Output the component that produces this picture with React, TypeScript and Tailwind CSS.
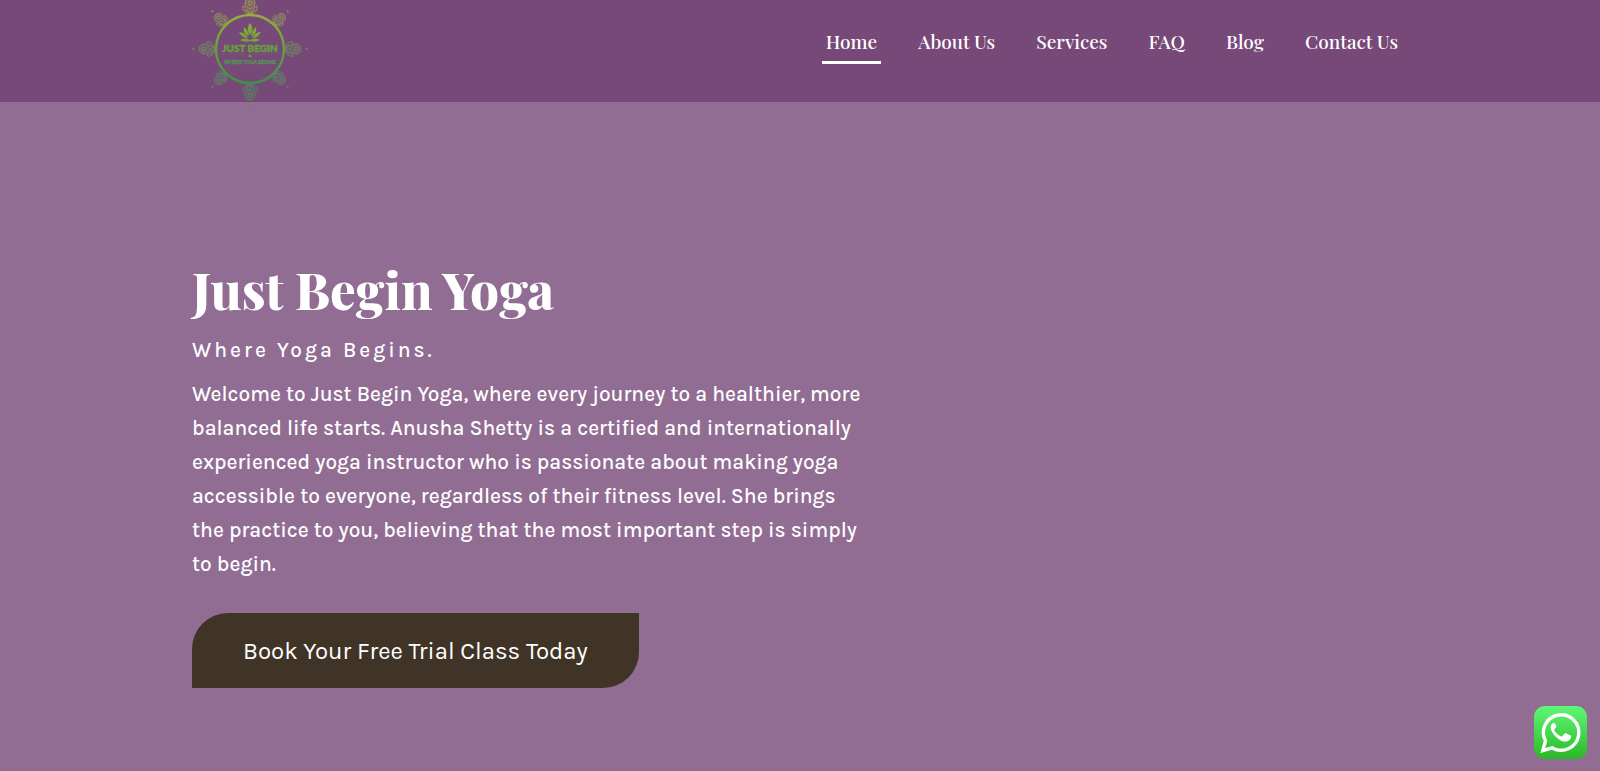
const navItems = ["Home", "About Us", "Services", "FAQ", "Blog", "Contact Us"];

// Flowers around the logo ring, one every 45 degrees
const flowers = [
  { angle: 0, scale: 1, color: "#a0a04e" },
  { angle: 45, scale: 0.86, color: "#909a5c" },
  { angle: 90, scale: 1, color: "#6f9060" },
  { angle: 135, scale: 0.86, color: "#5f8a64" },
  { angle: 180, scale: 1, color: "#4f8c5c" },
  { angle: 225, scale: 0.86, color: "#5f8a64" },
  { angle: 270, scale: 1, color: "#6f9060" },
  { angle: 315, scale: 0.86, color: "#909a5c" },
];

const Logo = () => (
  <svg viewBox="-58 -58 116 116" className="h-[116px] w-[116px]" role="img" aria-label="Just Begin, where yoga begins">
    <defs>
      <linearGradient id="leaf" gradientUnits="userSpaceOnUse" x1="0" y1="-36" x2="0" y2="36">
        <stop offset="0" stopColor="#9ab03a" />
        <stop offset="0.5" stopColor="#66a03c" />
        <stop offset="1" stopColor="#3c8f48" />
      </linearGradient>
    </defs>
    {flowers.map((f) => (
      <g
        key={f.angle}
        transform={`rotate(${f.angle}) translate(0 -34) scale(${f.scale})`}
        fill="none"
        stroke={f.color}
        strokeWidth="0.9"
      >
        <path
          d="M0-17C2-17 5-15 5-12C5-9 3-7 0-6C-3-7-5-9-5-12C-5-15-2-17 0-17Z"
          fill={f.color}
          fillOpacity="0.3"
        />
        <circle cx="0" cy="-12" r="2" />
        <path d="M0-6V-1" />
        <path d="M-1-1C-2-5-4-8-7-9C-8-5-5-2-1-1M-1-1L-5-6" />
        <path d="M1-1C2-5 4-8 7-9C8-5 5-2 1-1M1-1L5-6" />
        <circle cx="0" cy="-22.5" r="1.1" fill={f.color} stroke="none" />
      </g>
    ))}
    <circle r="34" fill="none" stroke="url(#leaf)" strokeWidth="2.4" />
    <g fill="url(#leaf)">
      <path d="M0-26C3-22 3-18 0-14C-3-18-3-22 0-26Z" />
      <path d="M-6-22C-3-20-2-17-1-13C-5-14-7-17-6-22Z" />
      <path d="M6-22C3-20 2-17 1-13C5-14 7-17 6-22Z" />
      <path d="M-11-17C-7-17-4-15-2-11C-6-11-9-13-11-17Z" />
      <path d="M11-17C7-17 4-15 2-11C6-11 9-13 11-17Z" />
      <path d="M-10-9C-6-11-3-11 0-9C3-11 6-11 10-9C7-7 3-7 0-8C-3-7-7-7-10-9Z" />
      <path d="M0 5L2 7L0 9L-2 7Z" />
    </g>
    <path d="M-29 5H-3M3 5H29" stroke="#75626f" strokeWidth="0.6" />
    <text
      y="3"
      textAnchor="middle"
      fill="#66a03c"
      stroke="#66a03c"
      strokeWidth="0.5"
      className="font-['Lato'] text-[10px] font-black"
    >
      JUST BEGIN
    </text>
    <text
      y="15"
      textAnchor="middle"
      fill="#56905a"
      stroke="#56905a"
      strokeWidth="0.3"
      className="font-['Lato'] text-[5px] font-black"
    >
      WHERE YOGA BEGINS
    </text>
  </svg>
);

const WhatsAppIcon = () => (
  <svg viewBox="0 0 53 53" className="h-[53px] w-[53px]" aria-hidden="true">
    <defs>
      <linearGradient id="whatsapp" x1="0" y1="0" x2="0" y2="1">
        <stop offset="0" stopColor="#5ff777" />
        <stop offset="1" stopColor="#2bb826" />
      </linearGradient>
    </defs>
    <rect width="53" height="53" rx="11" fill="url(#whatsapp)" />
    <path
      d="M8.8 44.5L11.5 34.8A17.7 17.7 0 1 1 18.4 41.9Z"
      fill="none"
      stroke="#fff"
      strokeWidth="3.4"
    />
    <path
      d="M21.5 18.3C20.9 17 20.3 17 19.5 17C18.5 17 16.7 18.7 16.7 21.6C16.7 25 20 29.4 23.4 32.2C26.8 34.8 29.5 35.6 31.6 35.6C34 35.6 36.7 33.5 36.9 31.8C37.1 30.4 37.1 29.8 36.4 29.4L32 27.3C31.2 27 30.7 27.1 30.2 27.8L28.3 30.2C27.9 30.6 27.4 30.6 26.8 30.3C24 29 21.8 26.9 20.3 24.2C20.1 23.7 20.2 23.3 20.6 22.9C21.5 22 22.8 21.1 22.4 20Z"
      fill="#fff"
    />
  </svg>
);

const App = () => {
  return (
    <div className="flex min-h-screen flex-col bg-[#916d93] font-['Karla','Roboto',sans-serif] text-white">
      <header className="flex h-[102px] items-start justify-between bg-[#774978] px-[12%]">
        <a href="#home" className="-mt-[9px] shrink-0">
          <Logo />
        </a>
        <nav className="flex gap-[33px] pt-[25px] pr-1.5 font-['Playfair_Display','Liberation_Serif',serif] text-[19px] font-medium">
          {navItems.map((item) => (
            <a
              key={item}
              href="#"
              className={
                item === "Home"
                  ? "border-b-3 border-white px-1 pb-1 leading-8 whitespace-nowrap"
                  : "px-1 pb-1 leading-8 whitespace-nowrap"
              }
            >
              {item}
            </a>
          ))}
        </nav>
      </header>

      <main className="flex-1 px-[12%] pt-[151px] pb-20">
        <div className="max-w-[680px]">
          <h1 className="font-['Playfair_Display','Liberation_Serif',serif] text-[51px] leading-[72px] font-extrabold">
            Just Begin Yoga
          </h1>
          <p className="mt-[7px] text-[21px] leading-9 font-medium tracking-[3px]">Where Yoga Begins.</p>
          <p className="mt-[9px] text-[21px] leading-[34px] font-medium">
            Welcome to Just Begin Yoga, where every journey to a healthier, more balanced life starts. Anusha Shetty is a
            certified and internationally experienced yoga instructor who is passionate about making yoga accessible to
            everyone, regardless of their fitness level. She brings the practice to you, believing that the most
            important step is simply to begin.
          </p>
          <button className="mt-8 h-[75px] rounded-tl-[36px] rounded-br-[36px] bg-[#403426] px-[51px] text-2xl">
            Book Your Free Trial Class Today
          </button>
        </div>
      </main>

      <a href="#whatsapp" aria-label="Chat on WhatsApp" className="fixed right-[13px] bottom-3">
        <WhatsAppIcon />
      </a>
    </div>
  );
};

export default App;
